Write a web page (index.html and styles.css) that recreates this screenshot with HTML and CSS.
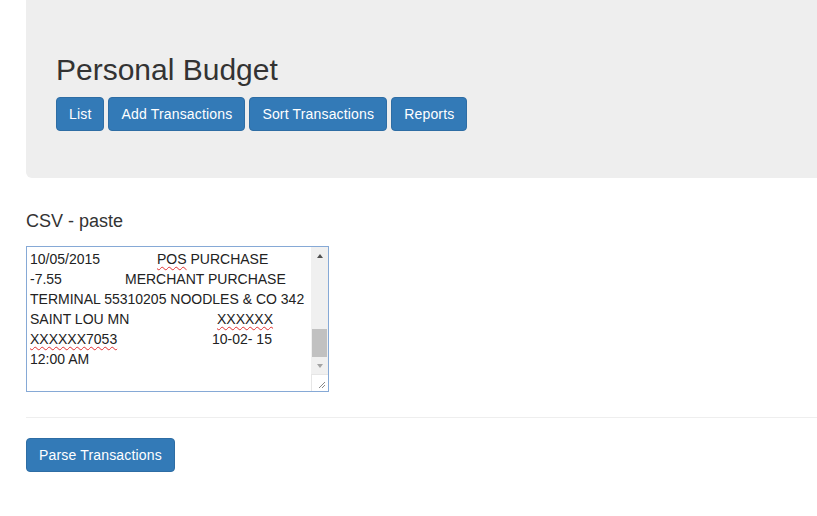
FILE: index.html
```html
<!DOCTYPE html>
<html>
<head>
<meta charset="utf-8">
<title>Personal Budget</title>
<link rel="stylesheet" href="styles.css">
</head>
<body>
<div class="page">
  <div class="jumbotron">
    <h1 class="title">Personal Budget</h1>
    <div class="nav">
      <button class="btn">List</button>
      <button class="btn">Add Transactions</button>
      <button class="btn">Sort Transactions</button>
      <button class="btn">Reports</button>
    </div>
  </div>

  <label class="label">CSV - paste</label>
  <div class="textarea">
    <div class="text">
      <div class="line"><span class="col w1">10/05/2015</span><span class="spell">POS</span> PURCHASE</div>
      <div class="line"><span class="col w2">-7.55</span>MERCHANT PURCHASE</div>
      <div class="line">TERMINAL 55310205 NOODLES &amp; CO 342</div>
      <div class="line"><span class="col w4">SAINT LOU MN</span><span class="spell">XXXXXX</span></div>
      <div class="line"><span class="col w5"><span class="spell">XXXXXX7053</span></span>10-02- 15</div>
      <div class="line">12:00 AM</div>
    </div>
    <div class="scrollcol">
      <div class="scrollbar">
        <div class="arrow up"></div>
        <div class="track"><div class="thumb"></div></div>
        <div class="arrow down"></div>
      </div>
      <div class="resizer">
        <svg width="16" height="16" viewBox="0 0 16 16"><path d="M13 7 L7 13 M13 10 L10 13" stroke="#8a8a8a" stroke-width="1" fill="none"/></svg>
      </div>
    </div>
  </div>

  <hr class="rule">
  <button class="btn">Parse Transactions</button>
</div>
</body>
</html>
```

FILE: styles.css
```css
html, body {
  margin: 0;
  padding: 0;
  background: #fff;
}
body {
  font-family: "Liberation Sans", Arial, sans-serif;
  font-size: 14px;
  color: #333;
  overflow: hidden;
}
.page {
  padding-left: 26px;
}
.jumbotron {
  background: #eeeeee;
  border-radius: 0 0 0 6px;
  padding: 53px 30px 47px 30px;
}
.title {
  margin: 0;
  font-size: 30px;
  font-weight: 400;
  line-height: 33px;
  color: #333;
}
.nav {
  margin-top: 11px;
  display: flex;
  gap: 4px;
}
.btn {
  font-family: "Liberation Sans", Arial, sans-serif;
  font-size: 14px;
  line-height: 20px;
  letter-spacing: 0.17px;
  padding: 6px 12px;
  color: #fff;
  background: #337ab7;
  border: 1px solid #2e6da4;
  border-radius: 4px;
  margin: 0;
  cursor: pointer;
  display: inline-block;
}
.label {
  display: block;
  margin-top: 33px;
  font-size: 18px;
  line-height: 20px;
  color: #333;
}
.textarea {
  margin-top: 15px;
  width: 301px;
  height: 144px;
  border: 1px solid #86a9d6;
  display: flex;
  background: #fff;
}
.text {
  flex: 1;
  padding: 2px 0 0 3px;
  color: #222;
  font-size: 14px;
  line-height: 20px;
  white-space: nowrap;
  overflow: hidden;
}
.col {
  display: inline-block;
}
.w1 { width: 127px; }
.w2 { width: 95px; }
.w4 { width: 187px; }
.w5 { width: 182px; }
.spell {
  text-decoration: underline wavy #e03030;
  text-decoration-thickness: 1px;
  text-underline-offset: 2px;
}
.scrollcol {
  width: 17px;
  display: flex;
  flex-direction: column;
}
.scrollbar {
  flex: 1;
  background: #f0f0f0;
  display: flex;
  flex-direction: column;
}
.arrow {
  height: 17px;
  display: flex;
  align-items: center;
  justify-content: center;
}
.arrow::before {
  content: "";
  width: 0;
  height: 0;
  border-left: 3.5px solid transparent;
  border-right: 3.5px solid transparent;
}
.up::before {
  border-bottom: 4px solid #505050;
}
.down::before {
  border-top: 4px solid #a3a3a3;
}
.track {
  flex: 1;
  display: flex;
  flex-direction: column;
  justify-content: flex-end;
  padding: 0 1px;
}
.thumb {
  height: 28px;
  background: #c1c1c1;
}
.resizer {
  height: 17px;
  background: #fff;
  border-top: 1px solid #e6e6e6;
  border-left: 1px solid #e6e6e6;
  box-sizing: border-box;
  display: flex;
  justify-content: flex-end;
  align-items: flex-end;
}
.resizer svg {
  display: block;
}
.rule {
  margin: 25px 0 20px 0;
  border: 0;
  border-top: 1px solid #eeeeee;
  height: 0;
}
```
